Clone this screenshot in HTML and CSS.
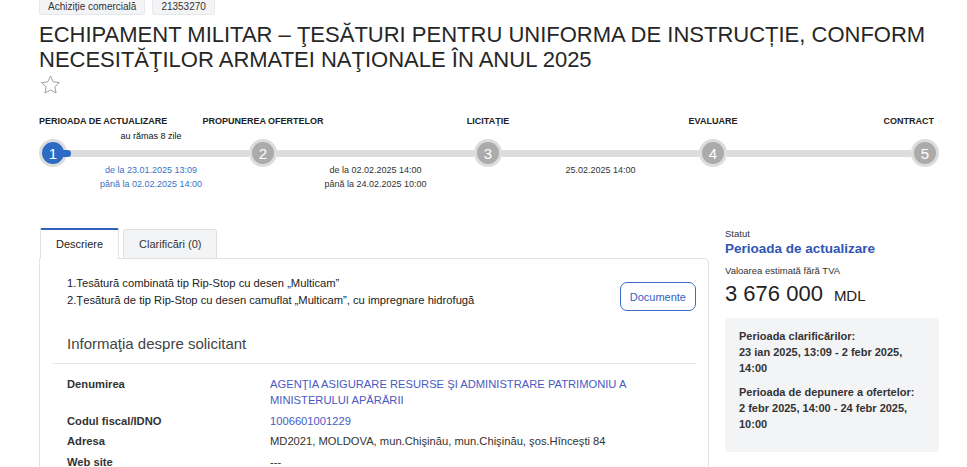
FILE: index.html
```html
<!DOCTYPE html>
<html lang="ro">
<head>
<meta charset="utf-8">
<title>Achiziție</title>
<link rel="stylesheet" href="styles.css">
</head>
<body>
<div class="page">
  <div class="tags">
    <span class="tag">Achiziție comercială</span>
    <span class="tag">21353270</span>
  </div>
  <h1 class="title">ECHIPAMENT MILITAR – ŢESĂTURI PENTRU UNIFORMA DE INSTRUCȚIE, CONFORM NECESITĂŢILOR ARMATEI NAŢIONALE ÎN ANUL 2025</h1>
  <div class="fav">
    <svg width="21" height="20" viewBox="0 0 24 23" aria-hidden="true"><path d="M12 1.2l3.1 6.6 7.1.9-5.2 4.9 1.4 7.1L12 17.2l-6.4 3.5 1.4-7.1-5.2-4.9 7.1-.9z" fill="none" stroke="#9b9b9b" stroke-width="1.1" stroke-linejoin="round"/></svg>
  </div>

  <div class="stepper">
    <div class="lbl lbl-first c1">PERIOADA DE ACTUALIZARE</div>
    <div class="lbl c3"><span>PROPUNEREA OFERTELOR</span></div>
    <div class="lbl c5"><span>LICITAŢIE</span></div>
    <div class="lbl c7"><span>EVALUARE</span></div>
    <div class="lbl lbl-last c9"><span>CONTRACT</span></div>

    <div class="remain c2">au rămas 8 zile</div>

    <div class="dot dot-active c1 r3">1<span class="nub"></span></div>
    <div class="track c2 r3"></div>
    <div class="dot c3 r3">2</div>
    <div class="track c4 r3"></div>
    <div class="dot c5 r3">3</div>
    <div class="track c6 r3"></div>
    <div class="dot c7 r3">4</div>
    <div class="track c8 r3"></div>
    <div class="dot c9 r3">5</div>

    <div class="dates dates-first dates-blue c2 r4">de la 23.01.2025 13:09<br>până la 02.02.2025 14:00</div>
    <div class="dates c4 r4">de la 02.02.2025 14:00<br>până la 24.02.2025 10:00</div>
    <div class="dates c6 r4">25.02.2025 14:00</div>
  </div>

  <div class="main">
    <section class="content">
      <div class="tabs">
        <div class="tab tab-active">Descriere</div>
        <div class="tab">Clarificări (0)</div>
      </div>
      <div class="panel">
        <div class="desc">
          <div class="desc-text">
            <p>1.Tesătură combinată tip Rip-Stop cu desen „Multicam”</p>
            <p>2.Țesătură de tip Rip-Stop cu desen camuflat „Multicam”, cu impregnare hidrofugă</p>
          </div>
          <button class="btn">Documente</button>
        </div>
        <h2 class="section-title">Informaţia despre solicitant</h2>
        <dl class="info">
          <dt>Denumirea</dt>
          <dd class="link">AGENŢIA ASIGURARE RESURSE ŞI ADMINISTRARE PATRIMONIU A MINISTERULUI APĂRĂRII</dd>
          <dt>Codul fiscal/IDNO</dt>
          <dd class="link">1006601001229</dd>
          <dt>Adresa</dt>
          <dd>MD2021, MOLDOVA, mun.Chişinău, mun.Chişinău, şos.Hînceşti 84</dd>
          <dt>Web site</dt>
          <dd>---</dd>
        </dl>
      </div>
    </section>

    <aside class="side">
      <div class="side-small">Statut</div>
      <div class="status">Perioada de actualizare</div>
      <div class="side-small side-gap">Valoarea estimată fără TVA</div>
      <div class="amount"><span class="amount-num">3 676 000</span><span class="amount-cur">MDL</span></div>
      <div class="periods">
        <div class="period">
          <div>Perioada clarificărilor:</div>
          <div>23 ian 2025, 13:09 - 2 febr 2025, 14:00</div>
        </div>
        <div class="period">
          <div>Perioada de depunere a ofertelor:</div>
          <div>2 febr 2025, 14:00 - 24 febr 2025, 10:00</div>
        </div>
      </div>
    </aside>
  </div>
</div>
</body>
</html>
```

FILE: styles.css
```css
* { box-sizing: border-box; }

html, body {
  margin: 0;
  padding: 0;
  background: #fff;
}

body {
  font-family: "Liberation Sans", Arial, sans-serif;
  color: #333;
  overflow: hidden;
}

.page {
  width: 900px;
  margin-left: 39px;
}

/* tags */
.tags {
  display: flex;
  gap: 7px;
  margin-top: -4px;
}

.tag {
  display: inline-block;
  font-size: 10px;
  line-height: 13px;
  padding: 3px 8px 1px;
  background: #f3f4f6;
  border: 1px solid #e6e7ea;
  border-radius: 3px;
  color: #333;
}

/* title */
.title {
  margin: 7px 0 0;
  font-size: 22px;
  line-height: 25px;
  font-weight: normal;
  color: #262626;
}

.fav {
  margin-top: 3px;
  margin-left: 1px;
  height: 20px;
}

.fav svg { display: block; }

/* stepper */
.stepper {
  margin-top: 20px;
  display: grid;
  grid-template-columns: 28px 182fr 28px 197fr 28px 197fr 28px 184fr 28px;
}

.c1 { grid-column: 1; }
.c2 { grid-column: 2; }
.c3 { grid-column: 3; }
.c4 { grid-column: 4; }
.c5 { grid-column: 5; }
.c6 { grid-column: 6; }
.c7 { grid-column: 7; }
.c8 { grid-column: 8; }
.c9 { grid-column: 9; }
.r3 { grid-row: 3; }
.r4 { grid-row: 4; }

.lbl {
  grid-row: 1;
  display: flex;
  justify-content: center;
  white-space: nowrap;
  font-size: 9px;
  line-height: 12px;
  font-weight: bold;
  color: #222;
}

.lbl-first { justify-content: flex-start; }
.lbl-last { justify-content: flex-end; padding-right: 5px; }

.remain {
  grid-row: 2;
  font-size: 9px;
  line-height: 12px;
  margin: 3px 0 -3px;
  padding-right: 14px;
  text-align: center;
  color: #111;
  white-space: nowrap;
}

.dot {
  position: relative;
  z-index: 1;
  width: 28px;
  height: 28px;
  border-radius: 50%;
  border: 3px solid #dcdcdc;
  background: #ababab;
  color: #fff;
  font-size: 15px;
  display: flex;
  align-items: center;
  justify-content: center;
}

.dot-active {
  background: #2b6bc4;
}

.nub {
  position: absolute;
  left: 21px;
  top: 8px;
  width: 8px;
  height: 7px;
  border-radius: 0 4px 4px 0;
  background: #2b6bc4;
}

.track {
  align-self: center;
  height: 7px;
  background: #dcdcdc;
}

.dates {
  margin-top: -3px;
  font-size: 9px;
  line-height: 13.5px;
  text-align: center;
  color: #333;
  white-space: nowrap;
}

.dates-first { padding-right: 14px; }
.dates-blue { color: #3a72c6; }

/* main */
.main {
  margin-top: 37px;
  display: grid;
  grid-template-columns: 1fr 214px;
  column-gap: 16px;
  align-items: start;
}

.tabs {
  display: flex;
  align-items: flex-end;
  gap: 4px;
  padding-left: 1px;
  height: 30px;
}

.tab {
  height: 29px;
  padding: 0 15px;
  display: flex;
  align-items: center;
  font-size: 11px;
  line-height: 13px;
  color: #333;
  background: #f3f4f6;
  border: 1px solid #dedede;
  border-bottom: none;
  border-radius: 3px 3px 0 0;
}

.tab-active {
  position: relative;
  z-index: 1;
  height: 31px;
  margin-bottom: -1px;
  padding-bottom: 1px;
  background: #fff;
  border-top: 2px solid #2f5fbf;
  border-color: #2f5fbf #e3e3e3 #e3e3e3;
  border-radius: 2px 2px 0 0;
  color: #222;
}

.panel {
  border: 1px solid #e3e3e3;
  border-radius: 0 4px 0 0;
  padding: 16px 12px 20px;
}

.desc {
  display: flex;
  justify-content: space-between;
  align-items: flex-start;
  padding-left: 15px;
}

.desc-text p {
  margin: 0;
  font-size: 11.2px;
  line-height: 17px;
  color: #222;
}

.btn {
  margin-top: 7px;
  height: 29px;
  padding: 0 9px;
  font-family: inherit;
  font-size: 11px;
  color: #3561c2;
  background: #fff;
  border: 1.5px solid #3d6ac7;
  border-radius: 7px;
}

.section-title {
  margin: 24px 0 0;
  padding: 0 0 10px 15px;
  font-size: 15px;
  line-height: 18px;
  font-weight: normal;
  color: #444;
  border-bottom: 1px solid #e6e6e6;
}

.info {
  margin: 12px 0 0;
  padding-left: 15px;
  display: grid;
  grid-template-columns: 203px 1fr;
  row-gap: 4.6px;
  font-size: 11.2px;
  line-height: 16px;
}

.info dt {
  font-weight: bold;
  color: #333;
}

.info dd {
  margin: 0;
  color: #333;
}

.info .link {
  color: #4a5ac2;
}

/* sidebar */
.side-small {
  font-size: 9.5px;
  line-height: 12px;
  color: #333;
}

.status {
  margin-top: 0;
  font-size: 13.5px;
  line-height: 17px;
  font-weight: bold;
  color: #2f55b5;
}

.side-gap {
  margin-top: 8px;
}

.amount {
  margin-top: 4px;
  display: flex;
  align-items: baseline;
  gap: 11px;
  line-height: 26px;
  color: #222;
}

.amount-num { font-size: 22px; }
.amount-cur { font-size: 15px; }

.periods {
  margin-top: 9px;
  background: #f3f4f6;
  border-radius: 4px;
  padding: 10px 14px 20px;
  font-size: 11px;
  line-height: 16px;
  font-weight: bold;
  color: #333;
}

.period + .period {
  margin-top: 8px;
}
```
